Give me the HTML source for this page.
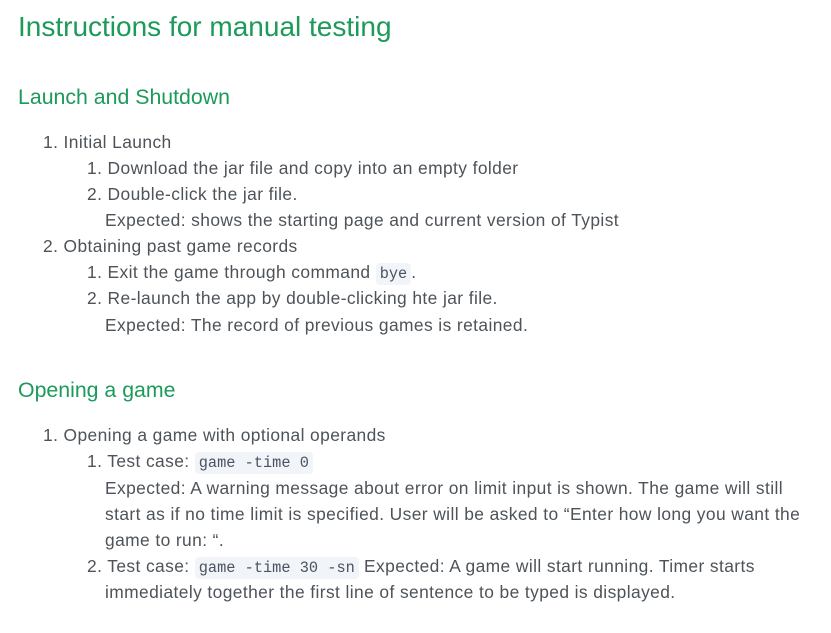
<!DOCTYPE html>
<html><head><meta charset="utf-8"><style>
body{margin:0;width:831px;height:633px;background:#fff;font-family:"Liberation Sans",sans-serif;color:#4d5358;position:relative;overflow:hidden}
div{position:absolute;white-space:nowrap;font-size:17.4px;line-height:20px;letter-spacing:0.4px}
.h1{font-size:28px;color:#1b9a59;line-height:32px;letter-spacing:0}
.h2{font-size:21.3px;color:#1b9a59;line-height:26px;letter-spacing:0}
code{font-family:"Liberation Mono",monospace;font-size:15.3px;background:#f1f4f8;padding:2px 4px;border-radius:4px;color:#4a5360;letter-spacing:0}
</style></head><body>
<div class="h1" style="left:18px;top:11px">Instructions for manual testing</div>
<div class="h2" style="left:18px;top:84px">Launch and Shutdown</div>
<div style="left:43px;top:132px">1. Initial Launch</div>
<div style="left:87px;top:158px">1. Download the jar file and copy into an empty folder</div>
<div style="left:87px;top:184px">2. Double-click the jar file.</div>
<div style="left:105px;top:210px">Expected: shows the starting page and current version of Typist</div>
<div style="left:43px;top:236px">2. Obtaining past game records</div>
<div style="left:87px;top:262px">1. Exit the game through command <code>bye</code>.</div>
<div style="left:87px;top:288px">2. Re-launch the app by double-clicking hte jar file.</div>
<div style="left:105px;top:315px">Expected: The record of previous games is retained.</div>
<div class="h2" style="left:18px;top:377px">Opening a game</div>
<div style="left:43px;top:425px">1. Opening a game with optional operands</div>
<div style="left:87px;top:451px">1. Test case: <code>game -time 0</code></div>
<div style="left:105px;top:478px">Expected: A warning message about error on limit input is shown. The game will still</div>
<div style="left:105px;top:504px">start as if no time limit is specified. User will be asked to “Enter how long you want the</div>
<div style="left:105px;top:530px">game to run: “.</div>
<div style="left:87px;top:556px">2. Test case: <code>game -time 30 -sn</code> Expected: A game will start running. Timer starts</div>
<div style="left:105px;top:582px">immediately together the first line of sentence to be typed is displayed.</div>
</body></html>
